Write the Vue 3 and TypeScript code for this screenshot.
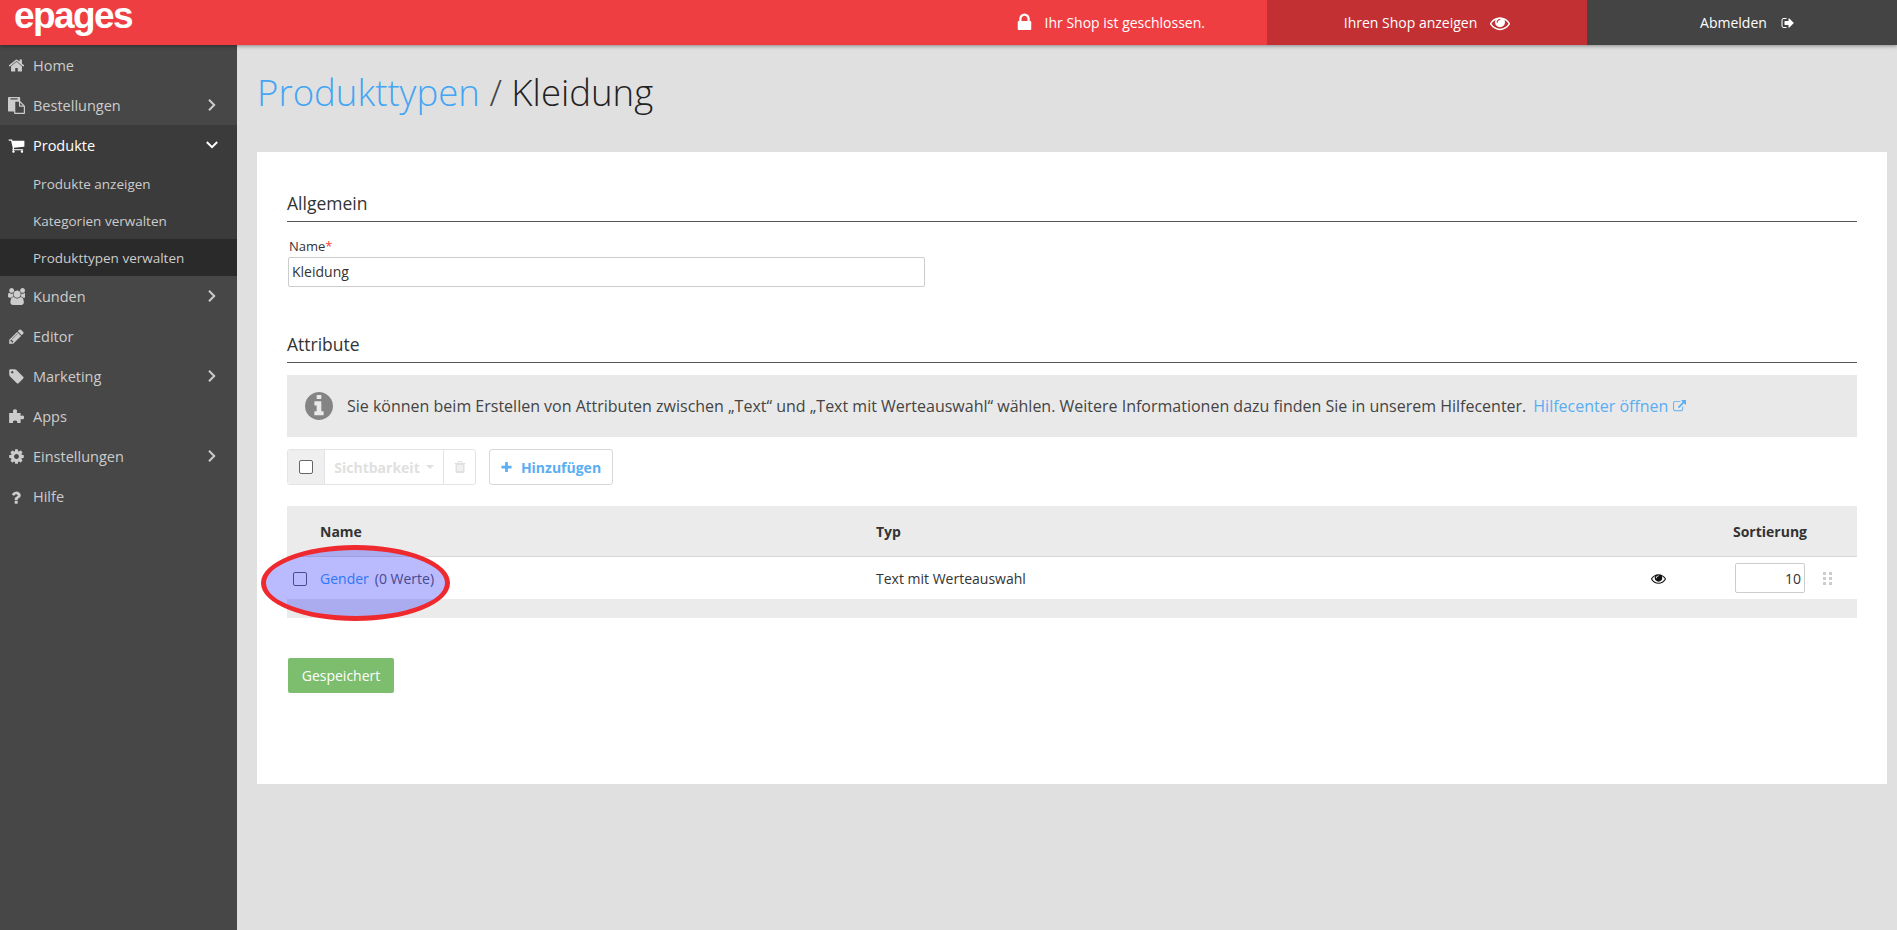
<template>
  <div class="app">
    <header class="topbar">
      <div class="logo">epages</div>
      <div class="status">
        <svg class="ico lock" viewBox="0 0 1792 1792"><path :d="icons.lock" /></svg>
        <span>Ihr Shop ist geschlossen.</span>
      </div>
      <a class="view-shop">
        <span>Ihren Shop anzeigen</span>
        <svg class="ico eye" viewBox="0 0 1792 1792"><path :d="icons.eye" /></svg>
      </a>
      <a class="logout">
        <span>Abmelden</span>
        <svg class="ico out" viewBox="0 0 1792 1792"><path :d="icons.signOut" /></svg>
      </a>
    </header>

    <div class="body">
      <aside class="sidebar">
        <template v-for="item in nav" :key="item.label">
          <div class="nav-group" :class="{ open: item.children }">
            <div class="nav-item">
              <svg class="nav-ico" viewBox="0 0 1792 1792"><path :d="icons[item.icon]" /></svg>
              <span class="nav-label">{{ item.label }}</span>
              <svg v-if="item.arrow" class="chev" :class="{ down: item.children }" viewBox="0 0 12 12">
                <path d="M3 .8 8.200 6 3 11.200" />
              </svg>
            </div>
            <div
              v-for="child in item.children"
              :key="child"
              class="nav-sub"
              :class="{ active: child === 'Produkttypen verwalten' }"
            >
              {{ child }}
            </div>
          </div>
        </template>
      </aside>

      <main class="main">
        <h1 class="title"><a>Produkttypen</a> <span class="sep">/</span> Kleidung</h1>

        <section class="card">
          <h2 class="section-title">Allgemein</h2>
          <label class="field-label">Name<span class="req">*</span></label>
          <div class="text-input">Kleidung</div>

          <h2 class="section-title second">Attribute</h2>
          <div class="info">
            <svg class="info-ico" viewBox="128 128 1536 1536"><path :d="icons.info" /></svg>
            <span>Sie können beim Erstellen von Attributen zwischen „Text“ und „Text mit Werteauswahl“ wählen. Weitere Informationen dazu finden Sie in unserem Hilfecenter.</span>
            <a class="help-link">Hilfecenter öffnen</a>
            <svg class="ext" viewBox="0 0 1792 1792"><path :d="icons.external" /></svg>
          </div>

          <div class="toolbar">
            <div class="btn-group">
              <div class="check-cell"><span class="checkbox"></span></div>
              <div class="vis-cell">Sichtbarkeit<i class="caret"></i></div>
              <div class="trash-cell">
                <svg viewBox="0 0 1792 1792"><path :d="icons.trash" /></svg>
              </div>
            </div>
            <button class="add-btn">
              <svg viewBox="128 128 1536 1536"><path :d="icons.plus" /></svg>
              Hinzufügen
            </button>
          </div>

          <div class="table">
            <div class="thead">
              <div class="col-name">Name</div>
              <div class="col-type">Typ</div>
              <div class="col-sort">Sortierung</div>
            </div>
            <div class="row">
              <span class="checkbox row-check"></span>
              <div class="col-name"><a>Gender</a><span class="count">(0 Werte)</span></div>
              <div class="col-type">Text mit Werteauswahl</div>
              <svg class="row-eye" viewBox="0 0 1792 1792"><path :d="icons.eye" /></svg>
              <div class="sort-input">10</div>
              <div class="drag">
                <i v-for="n in 6" :key="n"></i>
              </div>
            </div>
            <div class="tfoot"></div>
            <!-- red marker someone painted on the screenshot -->
            <div class="marker"></div>
          </div>

          <button class="save-btn">Gespeichert</button>
        </section>
      </main>
    </div>
  </div>
</template>

<script setup lang="ts">
interface NavItem {
  label: string;
  icon: string;
  arrow?: boolean;
  children?: string[];
}

const icons: Record<string, string> = {
  home: 'M1472 992v480q0 26-19 45t-45 19h-384v-384h-256v384h-384q-26 0-45-19t-19-45v-480q0-1 .5-3t.5-3l575-474 575 474q1 2 1 6zm223-69l-62 74q-8 9-21 11h-3q-13 0-21-7l-692-577-692 577q-12 8-24 7-13-2-21-11l-62-74q-8-10-7-23.5t11-21.5l719-599q32-26 76-26t76 26l244 204v-195q0-14 9-23t23-9h192q14 0 23 9t9 23v408l219 182q10 8 11 21.5t-7 23.5z',
  paste: 'M768 1664h896v-640h-416q-40 0-68-28t-28-68v-416h-384v1152zm256-1440v-64q0-13-9.500-22.500t-22.500-9.500h-704q-13 0-22.500 9.500t-9.500 22.500v64q0 13 9.500 22.500t22.500 9.500h704q13 0 22.500-9.500t9.500-22.500zm256 672h299l-299-299v299zm512 128v672q0 40-28 68t-68 28h-960q-40 0-68-28t-28-68v-160h-544q-40 0-68-28t-28-68v-1344q0-40 28-68t68-28h1088q40 0 68 28t28 68v328q21 13 36 28l408 408q28 28 48 76t20 88z',
  cart: 'M704 1536q0 52-38 90t-90 38-90-38-38-90 38-90 90-38 90 38 38 90zm896 0q0 52-38 90t-90 38-90-38-38-90 38-90 90-38 90 38 38 90zm128-1088v512q0 24-16.500 42.500t-40.500 21.500l-1044 122q13 60 13 70 0 16-24 64h920q26 0 45 19t19 45-19 45-45 19h-1024q-26 0-45-19t-19-45q0-11 8-31.500t16-36 21.500-40 15.500-29.500l-177-823h-204q-26 0-45-19t-19-45 19-45 45-19h256q16 0 28.500 6.500t19.500 15.500 13 24.500 8 26 5.500 29.500 4.500 26h1201q26 0 45 19t19 45z',
  users: 'M593 896q-162 5-265 128h-134q-82 0-138-40.500t-56-118.500q0-353 124-353 6 0 43.500 21t97.500 42.500 119 21.500q67 0 133-23-5 37-5 66 0 139 81 256zm1071 637q0 120-73 189.500t-194 69.500h-874q-121 0-194-69.500t-73-189.500q0-53 3.500-103.500t14-109 26.500-108.500 43-97.500 62-81 85.500-53.500 111.500-20q10 0 43 21.500t73 48 107 48 135 21.500 135-21.500 107-48 73-48 43-21.500q61 0 111.500 20t85.500 53.500 62 81 43 97.500 26.500 108.500 14 109 3.500 103.500zm-1024-1277q0 106-75 181t-181 75-181-75-75-181 75-181 181-75 181 75 75 181zm704 384q0 159-112.500 271.500t-271.500 112.500-271.500-112.500-112.500-271.500 112.500-271.500 271.500-112.500 271.500 112.500 112.500 271.500zm576 225q0 78-56 118.500t-138 40.500h-134q-103-123-265-128 81-117 81-256 0-29-5-66 66 23 133 23 59 0 119-21.500t97.500-42.500 43.500-21q124 0 124 353zm-128-609q0 106-75 181t-181 75-181-75-75-181 75-181 181-75 181 75 75 181z',
  pencil: 'M491 1536l91-91-235-235-91 91v107h128v128h107zm523-928q0-22-22-22-10 0-17 7l-542 542q-7 7-7 17 0 22 22 22 10 0 17-7l542-542q7-7 7-17zm-54-192l416 416-832 832h-416v-416zm683 96q0 53-37 90l-166 166-416-416 166-165q36-38 90-38 53 0 91 38l235 234q37 39 37 91z',
  tag: 'M576 448q0-53-37.500-90.500t-90.500-37.500-90.500 37.500-37.500 90.500 37.500 90.500 90.500 37.500 90.500-37.500 37.500-90.500zm1067 576q0 53-37 90l-491 492q-39 37-91 37-53 0-90-37l-715-716q-38-37-64.500-101t-26.500-117v-416q0-52 38-90t90-38h416q53 0 117 26.500t102 64.500l715 714q37 39 37 91z',
  puzzle: 'M120 520H560C470 360 520 130 740 130C960 130 1010 360 920 520H1330V850C1470 740 1700 780 1700 990C1700 1200 1470 1240 1330 1130V1580H950C1040 1440 960 1310 750 1310C540 1310 460 1440 550 1580H120Z',
  cog: 'M1152 896q0-106-75-181t-181-75-181 75-75 181 75 181 181 75 181-75 75-181zm512-109v222q0 12-8 23t-20 13l-185 28q-19 54-39 91 35 50 107 138 10 12 10 25t-9 23q-27 37-99 108t-94 71q-12 0-26-9l-138-108q-44 23-91 38-16 136-29 186-7 28-36 28h-222q-14 0-24.500-8.500t-11.500-21.500l-28-184q-49-16-90-37l-141 107q-10 9-25 9-14 0-25-11-126-114-165-168-7-10-7-23 0-12 8-23 15-21 51-66.500t54-70.500q-27-50-41-99l-183-27q-13-2-21-12.500t-8-23.500v-222q0-12 8-23t19-13l186-28q14-46 39-92-40-57-107-138-10-12-10-24 0-10 9-23 26-36 98.500-107.500t94.500-71.500q13 0 26 10l138 107q44-23 91-38 16-136 29-186 7-28 36-28h222q14 0 24.500 8.500t11.500 21.500l28 184q49 16 90 37l142-107q9-9 24-9 13 0 25 10 129 119 165 170 7 8 7 22 0 12-8 23-15 21-51 66.500t-54 70.500q26 50 41 98l183 28q13 2 21 12.500t8 23.500z',
  question: 'M1024 1376v240q0 16-12 28t-28 12h-240q-16 0-28-12t-12-28v-240q0-16 12-28t28-12h240q16 0 28 12t12 28zm316-600q0 54-15.500 101t-35 76.500-55 59.500-57.500 43.500-61 35.500q-41 23-68.500 65t-27.500 67q0 17-12 32.500t-28 15.500h-240q-15 0-25.500-18.500t-10.500-37.500v-45q0-83 65-156.500t143-108.500q59-27 84-56t25-76q0-42-46.500-74t-107.500-32q-65 0-108 29-35 25-107 115-13 16-31 16-12 0-25-8l-164-125q-13-10-15.500-25t5.500-28q160-266 464-266 80 0 161 31t146 83 106 127.500 41 158.500z',
  lock: 'M640 768h512v-192q0-106-75-181t-181-75-181 75-75 181v192zm832 96v576q0 40-28 68t-68 28h-960q-40 0-68-28t-28-68v-576q0-40 28-68t68-28h32v-192q0-184 132-316t316-132 316 132 132 316v192h32q40 0 68 28t28 68z',
  eye: 'M1664 960q-152-236-381-353 61 104 61 225 0 185-131.500 316.500t-316.500 131.500-316.500-131.500-131.500-316.500q0-121 61-225-229 117-381 353 133 205 333.500 326.500t434.500 121.500 434.500-121.500 333.500-326.500zm-720-384q0-20-14-34t-34-14q-125 0-214.500 89.500t-89.500 214.500q0 20 14 34t34 14 34-14 14-34q0-86 61-147t147-61q20 0 34-14t14-34zm848 384q0 34-20 69-140 230-376.500 368.500t-499.500 138.500-499.500-139-376.500-368q-20-35-20-69t20-69q140-229 376.500-368t499.500-139 499.500 139 376.500 368q20 35 20 69z',
  signOut: 'M704 1440q0 4 1 20t.5 26.500-3 23.500-10 19.500-20.500 6.500h-320q-119 0-203.500-84.500t-84.500-203.500v-704q0-119 84.500-203.500t203.500-84.500h320q13 0 22.500 9.500t9.500 22.500q0 4 1 20t.5 26.500-3 23.500-10 19.500-20.500 6.500h-320q-66 0-113 47t-47 113v704q0 66 47 113t113 47h312l11.500 1 11.500 3 8 5.500 7 9 2 13.500zm928-544q0 26-19 45l-544 544q-19 19-45 19t-45-19-19-45v-288h-448q-26 0-45-19t-19-45v-384q0-26 19-45t45-19h448v-288q0-26 19-45t45-19 45 19l544 544q19 19 19 45z',
  info: 'M1152 1376v-160q0-14-9-23t-23-9h-96v-512q0-14-9-23t-23-9h-320q-14 0-23 9t-9 23v160q0 14 9 23t23 9h96v320h-96q-14 0-23 9t-9 23v160q0 14 9 23t23 9h448q14 0 23-9t9-23zm-128-896v-160q0-14-9-23t-23-9h-192q-14 0-23 9t-9 23v160q0 14 9 23t23 9h192q14 0 23-9t9-23zm640 416q0 209-103 385.500t-279.500 279.500-385.500 103-385.500-103-279.500-279.500-103-385.500 103-385.500 279.500-279.500 385.500-103 385.500 103 279.500 279.500 103 385.500z',
  trash: 'M704 1376v-704q0-14-9-23t-23-9h-64q-14 0-23 9t-9 23v704q0 14 9 23t23 9h64q14 0 23-9t9-23zm256 0v-704q0-14-9-23t-23-9h-64q-14 0-23 9t-9 23v704q0 14 9 23t23 9h64q14 0 23-9t9-23zm256 0v-704q0-14-9-23t-23-9h-64q-14 0-23 9t-9 23v704q0 14 9 23t23 9h64q14 0 23-9t9-23zm-544-992h448l-48-117q-7-9-17-11h-317q-10 2-17 11zm928 32v64q0 14-9 23t-23 9h-96v948q0 83-47 143.500t-113 60.500h-832q-66 0-113-58.500t-47-141.500v-952h-96q-14 0-23-9t-9-23v-64q0-14 9-23t23-9h309l70-167q15-37 54-63t79-26h320q40 0 79 26t54 63l70 167h309q14 0 23 9t9 23z',
  plus: 'M1600 736v192q0 40-28 68t-68 28h-416v416q0 40-28 68t-68 28h-192q-40 0-68-28t-28-68v-416h-416q-40 0-68-28t-28-68v-192q0-40 28-68t68-28h416v-416q0-40 28-68t68-28h192q40 0 68 28t28 68v416h416q40 0 68 28t28 68z',
  external: 'M1408 928v320q0 119-84.500 203.500t-203.500 84.500h-832q-119 0-203.500-84.500t-84.500-203.500v-832q0-119 84.500-203.500t203.500-84.500h704q14 0 23 9t9 23v64q0 14-9 23t-23 9h-704q-66 0-113 47t-47 113v832q0 66 47 113t113 47h832q66 0 113-47t47-113v-320q0-14 9-23t23-9h64q14 0 23 9t9 23zm384-864v512q0 26-19 45t-45 19-45-19l-176-176-652 652q-10 10-23 10t-23-10l-114-114q-10-10-10-23t10-23l652-652-176-176q-19-19-19-45t19-45 45-19h512q26 0 45 19t19 45z',
};

const nav: NavItem[] = [
  { label: 'Home', icon: 'home' },
  { label: 'Bestellungen', icon: 'paste', arrow: true },
  {
    label: 'Produkte',
    icon: 'cart',
    arrow: true,
    children: ['Produkte anzeigen', 'Kategorien verwalten', 'Produkttypen verwalten'],
  },
  { label: 'Kunden', icon: 'users', arrow: true },
  { label: 'Editor', icon: 'pencil' },
  { label: 'Marketing', icon: 'tag', arrow: true },
  { label: 'Apps', icon: 'puzzle' },
  { label: 'Einstellungen', icon: 'cog', arrow: true },
  { label: 'Hilfe', icon: 'question' },
];
</script>

<style>
html,
body {
  margin: 0;
  background: #e0e0e0;
}
</style>

<style scoped>
.app {
  height: 930px;
  overflow: hidden;
  display: flex;
  flex-direction: column;
  font-family: 'Open Sans', sans-serif;
  font-size: 14px;
  color: #333;
}

.topbar {
  height: 45px;
  flex: none;
  display: flex;
  background: #ef3e42;
  color: #fff;
  box-shadow: 0 1px 4px rgba(0, 0, 0, 0.4);
  position: relative;
  z-index: 2;
}

.logo {
  width: 237px;
  height: 31px;
  box-sizing: border-box;
  padding-left: 14px;
  font: bold 37px/31px 'Liberation Sans', sans-serif;
  letter-spacing: -1.6px;
}

.status,
.view-shop,
.logout {
  display: flex;
  align-items: center;
  justify-content: center;
}

.status {
  flex: 1;
  justify-content: flex-end;
  padding-right: 62px;
}

.view-shop {
  width: 320px;
  background: #c23034;
}

.logout {
  width: 310px;
  box-sizing: border-box;
  padding-left: 11px;
  background: #444;
}

.ico {
  fill: #fff;
}

.lock {
  width: 21px;
  height: 21px;
  margin-right: 10px;
}

.eye {
  width: 20px;
  height: 20px;
  margin-left: 13px;
}

.out {
  width: 14px;
  height: 14px;
  margin-left: 14px;
}

.body {
  flex: 1;
  display: flex;
  min-height: 0;
}

.sidebar {
  width: 237px;
  flex: none;
  background: #474747;
  color: #ccc;
}

.nav-group.open {
  background: #3b3b3b;
  color: #fff;
}

.nav-item {
  height: 40px;
  display: flex;
  align-items: center;
  padding-left: 8px;
  font-size: 14.5px;
}

.nav-ico {
  width: 17px;
  height: 17px;
  fill: currentColor;
  margin-right: 8px;
}

.nav-label {
  flex: 1;
}

.chev {
  width: 12px;
  height: 12px;
  margin-right: 19px;
  fill: none;
  stroke: currentColor;
  stroke-width: 2;
}

.chev.down {
  transform: rotate(90deg);
}

.nav-sub {
  height: 37px;
  line-height: 38px;
  padding-left: 33px;
  font-size: 13.5px;
  color: #ccc;
}

.nav-sub.active {
  background: #2a2a2a;
}

.main {
  flex: 1;
  min-width: 0;
  padding: 0 10px 0 20px;
}

.title {
  margin: 0;
  padding-top: 23px;
  height: 107px;
  box-sizing: border-box;
  font-size: 36.6px;
  line-height: 48px;
  font-weight: 300;
  color: #222;
}

.title a {
  color: #42a5f5;
}

.sep {
  color: #444;
}

.card {
  height: 632px;
  box-sizing: border-box;
  padding: 36px 30px 0 30px;
  background: #fff;
}

.section-title {
  margin: 0;
  height: 33px;
  line-height: 30px;
  font-size: 17.5px;
  font-weight: 400;
  color: #333;
  border-bottom: 1px solid #555;
}

.section-title.second {
  margin-top: 42px;
}

.field-label {
  display: block;
  margin: 15px 0 0 2px;
  height: 20px;
  font-size: 13px;
  line-height: 18px;
}

.req {
  color: #ef3e42;
}

.text-input {
  width: 637px;
  height: 30px;
  margin-left: 1px;
  box-sizing: border-box;
  padding-left: 3px;
  line-height: 28px;
  border: 1px solid #ccc;
  border-radius: 2px;
}

.info {
  margin-top: 12px;
  height: 62px;
  display: flex;
  align-items: center;
  padding-left: 18px;
  background: #e9e9e9;
  font-size: 16px;
  color: #444;
}

.info-ico {
  width: 28px;
  height: 28px;
  fill: #848484;
  margin-right: 14px;
}

.help-link {
  color: #5aaef2;
  margin-left: 7px;
}

.ext {
  width: 13px;
  height: 13px;
  margin-left: 5px;
  fill: #5aaef2;
}

.toolbar {
  margin-top: 12px;
  display: flex;
  gap: 13px;
}

.btn-group {
  display: flex;
  height: 36px;
  box-sizing: border-box;
  border: 1px solid #e4e4e4;
  border-radius: 3px;
}

.check-cell {
  width: 36px;
  display: flex;
  align-items: center;
  justify-content: center;
  background: #efefef;
  border-right: 1px solid #e4e4e4;
}

.checkbox {
  display: block;
  width: 12px;
  height: 12px;
  background: #fff;
  border: 1px solid #666;
  border-radius: 2px;
}

.vis-cell {
  width: 119px;
  display: flex;
  align-items: center;
  justify-content: center;
  box-sizing: border-box;
  border-right: 1px solid #e4e4e4;
  font-size: 14px;
  font-weight: 700;
  color: #e0e0e0;
}

.caret {
  margin-left: 6px;
  border: 4px solid transparent;
  border-top-color: #e0e0e0;
  border-bottom: 0;
}

.trash-cell {
  width: 31px;
  display: flex;
  align-items: center;
  justify-content: center;
}

.trash-cell svg {
  width: 14px;
  height: 14px;
  fill: #e0e0e0;
}

.add-btn {
  width: 124px;
  height: 36px;
  display: flex;
  align-items: center;
  justify-content: center;
  gap: 9px;
  padding: 0;
  background: #fff;
  border: 1px solid #d8d8d8;
  border-radius: 3px;
  font: 700 14px 'Open Sans', sans-serif;
  color: #5aaef2;
}

.add-btn svg {
  width: 11px;
  height: 11px;
  fill: #5aaef2;
}

.table {
  position: relative;
  margin-top: 21px;
}

.thead {
  height: 51px;
  box-sizing: border-box;
  display: flex;
  align-items: center;
  padding-left: 33px;
  background: #ebebeb;
  border-bottom: 1px solid #d8d8d8;
  font-weight: 700;
  font-size: 14px;
}

.col-name {
  width: 556px;
  flex: none;
}

.col-type {
  flex: none;
  width: 300px;
}

.col-sort {
  margin-left: auto;
  margin-right: 50px;
}

.row {
  height: 42px;
  display: flex;
  align-items: center;
  background: #fff;
}

.row-check {
  flex: none;
  margin: 2px 13px 0 6px;
}

.row .col-name a {
  color: #42a5f5;
}

.count {
  margin-left: 6px;
  color: #666;
}

.row-eye {
  width: 15px;
  height: 15px;
  margin-left: 475px;
  fill: #111;
}

.sort-input {
  width: 70px;
  height: 30px;
  box-sizing: border-box;
  margin-left: 69px;
  padding-right: 3px;
  text-align: right;
  line-height: 30px;
  border: 1px solid #ccc;
  border-radius: 2px;
}

.drag {
  width: 9px;
  margin-left: 18px;
  display: grid;
  grid-template-columns: 3px 3px;
  gap: 2px 3px;
}

.drag i {
  width: 3px;
  height: 3px;
  background: #ccc;
}

.tfoot {
  height: 19px;
  background: #ebebeb;
}

.marker {
  position: absolute;
  left: -26px;
  top: 39px;
  width: 189px;
  height: 76px;
  box-sizing: border-box;
  border: 5px solid #ee2a2e;
  border-radius: 50%;
  background: rgba(0, 0, 255, 0.27);
}

.save-btn {
  display: block;
  margin: 40px 0 0 1px;
  width: 106px;
  height: 35px;
  padding: 0;
  background: #7dbd6e;
  border: 0;
  border-radius: 2px;
  font: 14px 'Open Sans', sans-serif;
  color: #fff;
}
</style>
